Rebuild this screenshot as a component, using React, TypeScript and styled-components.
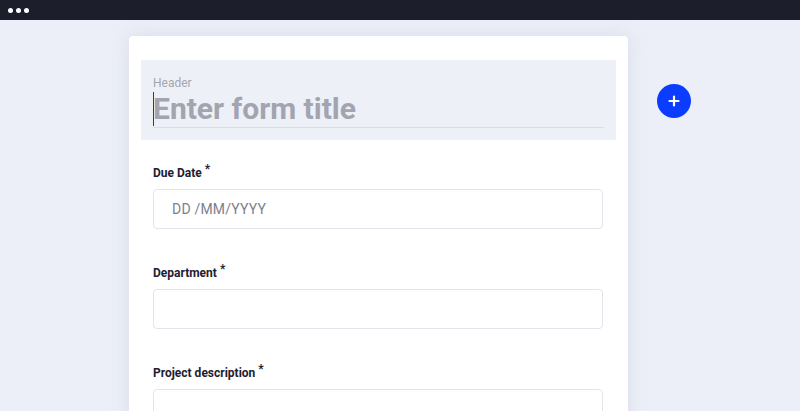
import React from "react";
import styled, { createGlobalStyle } from "styled-components";

const Global = createGlobalStyle`
  html, body { margin: 0; padding: 0; }
  body {
    background: #eceff7;
    font-family: Roboto, "Noto Sans", Arial, sans-serif;
    overflow: hidden;
  }
  * { box-sizing: border-box; }
`;

const Page = styled.div`
  width: 800px;
  height: 411px;
  display: flex;
  flex-direction: column;
  background: #eceff7;
  overflow: hidden;
`;

const TopBar = styled.div`
  height: 20px;
  background: #1c1e2b;
  display: flex;
  align-items: center;
  gap: 3px;
  padding-left: 8px;
  flex-shrink: 0;
`;

const Dot = styled.span`
  width: 5px;
  height: 5px;
  border-radius: 50%;
  background: #ffffff;
`;

const Stage = styled.div`
  flex: 1;
  display: flex;
  align-items: flex-start;
  padding-top: 16px;
  padding-left: 129px;
  gap: 29px;
`;

const Card = styled.div`
  width: 499px;
  height: 400px;
  flex-shrink: 0;
  background: #ffffff;
  border-radius: 4px;
  box-shadow: 0 0 18px rgba(180, 186, 205, 0.35);
  padding: 24px 12px 0 12px;
  display: flex;
  flex-direction: column;
`;

const HeaderBlock = styled.div`
  background: #edf0f7;
  height: 80px;
  flex-shrink: 0;
  padding: 16px 12px 0 12px;
  display: flex;
  flex-direction: column;
`;

const HeaderLabel = styled.div`
  font-size: 12px;
  line-height: 14px;
  color: #a3a6b0;
`;

const TitleInput = styled.div`
  margin-top: 1px;
  height: 37px;
  border-bottom: 1px solid #d9dce6;
  display: flex;
  align-items: center;
  position: relative;
`;

const Caret = styled.span`
  position: absolute;
  left: 0;
  top: 1px;
  width: 1px;
  height: 34px;
  background: #3a3c48;
`;

const TitleText = styled.span`
  font-size: 30px;
  font-weight: 700;
  color: #a2a5b0;
  line-height: 36px;
`;

const Fields = styled.div`
  padding: 0 12px;
  display: flex;
  flex-direction: column;
`;

const Field = styled.div`
  display: flex;
  flex-direction: column;
  padding-top: 25px;
  & + & {
    padding-top: 36px;
  }
`;

const Label = styled.div`
  font-size: 12px;
  font-weight: 700;
  color: #1e2030;
  line-height: 16px;
  height: 16px;
  margin-bottom: 8px;
`;

const Star = styled.sup`
  font-size: 12px;
  margin-left: 3px;
  vertical-align: 4px;
  line-height: 0;
`;

const Input = styled.div`
  width: 450px;
  height: 40px;
  flex-shrink: 0;
  border: 1px solid #e2e4ec;
  border-radius: 4px;
  display: flex;
  align-items: center;
  padding-left: 18px;
  font-size: 14px;
  letter-spacing: 0.2px;
  color: #7d808c;
`;

const Side = styled.div`
  padding-top: 48px;
`;

const AddButton = styled.button`
  width: 34px;
  height: 34px;
  border-radius: 50%;
  border: none;
  background: #0a3dff;
  display: flex;
  align-items: center;
  justify-content: center;
  padding: 0;
  cursor: pointer;
`;

export default function App() {
  return (
    <Page>
      <Global />
      <TopBar>
        <Dot />
        <Dot />
        <Dot />
      </TopBar>
      <Stage>
        <Card>
          <HeaderBlock>
            <HeaderLabel>Header</HeaderLabel>
            <TitleInput>
              <Caret />
              <TitleText>Enter form title</TitleText>
            </TitleInput>
          </HeaderBlock>
          <Fields>
            <Field>
              <Label>
                Due Date<Star>*</Star>
              </Label>
              <Input>DD /MM/YYYY</Input>
            </Field>
            <Field>
              <Label>
                Department<Star>*</Star>
              </Label>
              <Input />
            </Field>
            <Field>
              <Label>
                Project description<Star>*</Star>
              </Label>
              <Input />
            </Field>
          </Fields>
        </Card>
        <Side>
          <AddButton aria-label="Add">
            <svg width="12" height="12" viewBox="0 0 12 12">
              <path d="M6 1.5v9M1.5 6h9" stroke="#fff" strokeWidth="2.2" strokeLinecap="round" />
            </svg>
          </AddButton>
        </Side>
      </Stage>
    </Page>
  );
}
